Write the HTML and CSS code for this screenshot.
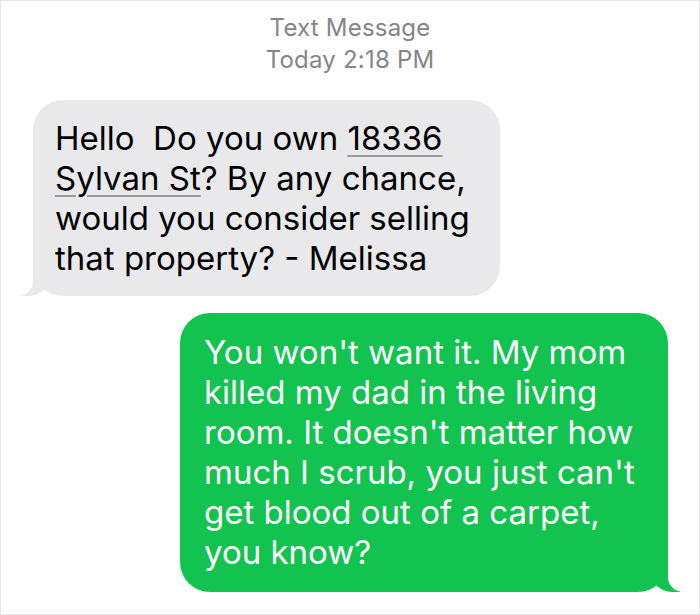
FILE: index.html
```html
<!DOCTYPE html>
<html lang="en">
  <head>
    <meta charset="UTF-8" />
    <meta name="viewport" content="width=device-width, initial-scale=1.0" />
    <title>Text Message</title>
    <link rel="stylesheet" href="styles.css">
  </head>
  <body>
    <div class="screen">
      <div class="stamp">
        <div>Text Message</div>
        <div>Today 2:18 PM</div>
      </div>
      <div class="row">
        <div class="bubble received">
          Hello&nbsp; Do you own <span class="link">18336</span><br>
          <span class="link">Sylvan St</span>? By any chance,<br>
          would you consider selling<br>
          that property? - Melissa
        </div>
      </div>
      <div class="row right">
        <div class="bubble sent">
          You won't want it. My mom<br>
          killed my dad in the living<br>
          room. It doesn't matter how<br>
          much I scrub, you just can't<br>
          get blood out of a carpet,<br>
          you know?
        </div>
      </div>
    </div>
  </body>
</html>
```

FILE: styles.css
```css
body {
  margin: 0;
  background: #fff;
}
.screen {
  width: 700px;
  height: 615px;
  box-sizing: border-box;
  border: 1px solid #e6e6e6;
  font-family: Inter, "Liberation Sans", sans-serif;
  overflow: hidden;
}
.stamp {
  padding-top: 11px;
  text-align: center;
  color: #858589;
  font-size: 24px;
  line-height: 32px;
  letter-spacing: 0.2px;
}
.row {
  display: flex;
  padding: 0 31px 0 32px;
}
.row.right {
  justify-content: flex-end;
}
.bubble {
  position: relative;
  font-size: 33px;
  line-height: 40px;
  letter-spacing: 0;
  border-radius: 30px;
  white-space: nowrap;
}
.received {
  margin-top: 24px;
  width: 467px;
  box-sizing: border-box;
  padding: 18px 22px;
  background: #e9e9eb;
  color: #000;
}
.sent {
  margin-top: 17px;
  width: 488px;
  box-sizing: border-box;
  padding: 19px 24px 20px;
  background: #12c350;
  color: #fff;
}
.link {
  text-decoration: underline;
  text-decoration-color: #9b9b9f;
  text-decoration-thickness: 2px;
  text-underline-offset: 5px;
}
.bubble::before,
.bubble::after {
  content: "";
  position: absolute;
  bottom: 0;
  height: 30px;
}
.sent::before {
  right: -12px;
  width: 30px;
  background: #12c350;
  border-bottom-left-radius: 22px;
}
.sent::after {
  right: -16px;
  width: 16px;
  background: #fff;
  border-bottom-left-radius: 15px;
}
.received::before {
  left: -12px;
  width: 30px;
  background: #e9e9eb;
  border-bottom-right-radius: 22px;
}
.received::after {
  left: -16px;
  width: 16px;
  background: #fff;
  border-bottom-right-radius: 15px;
}
```
